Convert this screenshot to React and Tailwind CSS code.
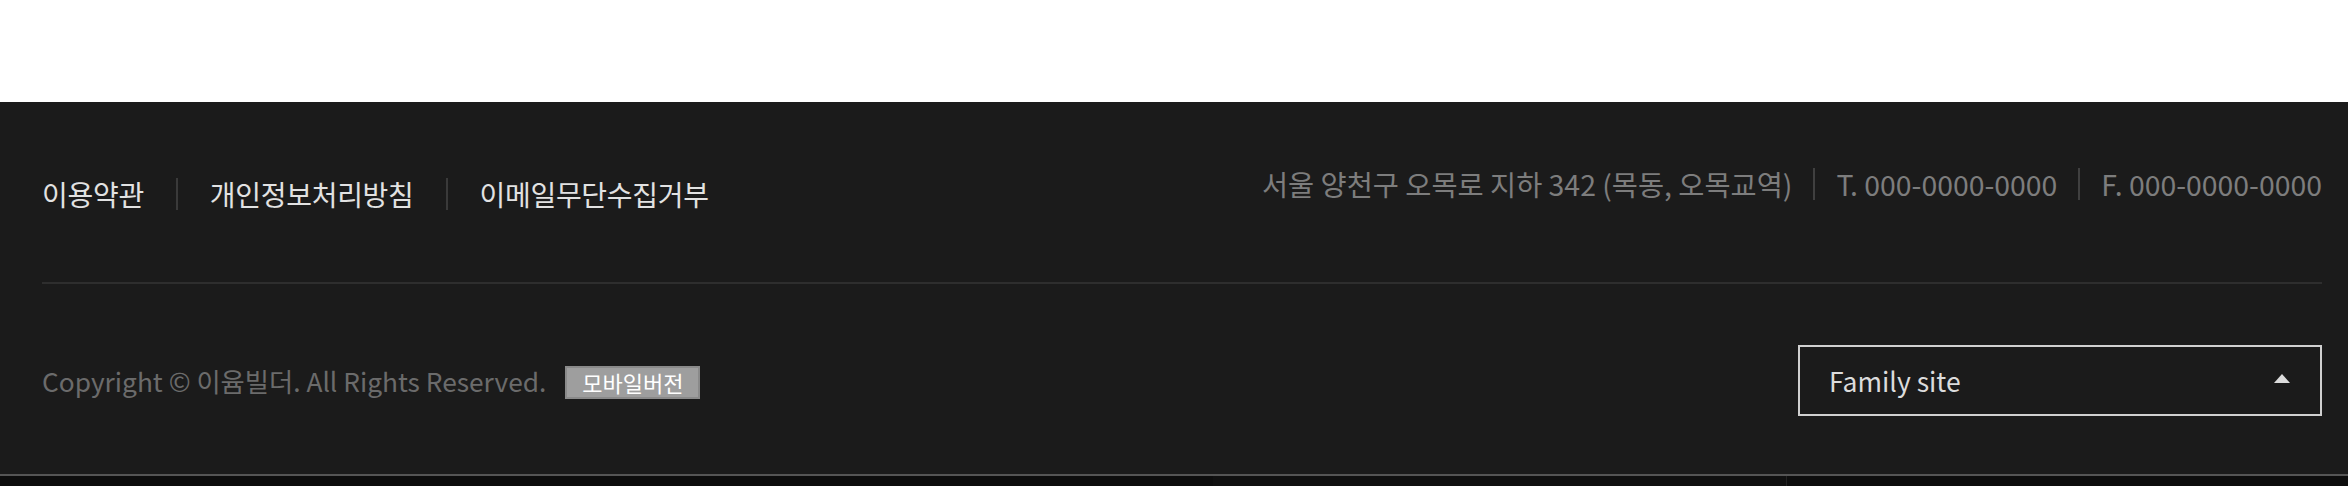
export default function App() {
  const font = { fontFamily: '"Noto Sans CJK KR", "Noto Sans", sans-serif' };
  return (
    <div className="w-[2348px] h-[486px] bg-white flex flex-col" style={font}>
      <div className="h-[102px] bg-white shrink-0" />
      <footer className="bg-[#1b1b1b] h-[372px] shrink-0 pl-[42px] pr-[26px] flex flex-col">
        <div className="flex justify-between items-start pt-[72px] h-[182px] border-b-2 border-[#2e2e2e]">
          <nav className="flex items-center text-[28px] leading-[40px] text-[#e2e2e2] tracking-[-0.3px]">
            <a>이용약관</a>
            <span className="mx-[32px] w-[2px] h-[32px] bg-[#3a3a3a]" />
            <a>개인정보처리방침</a>
            <span className="mx-[32px] w-[2px] h-[32px] bg-[#3a3a3a]" />
            <a>이메일무단수집거부</a>
          </nav>
          <div className="flex items-center text-[28.4px] leading-[40px] text-[#7d7d7d] -mt-[10px]">
            <span>서울 양천구 오목로 지하 342 (목동, 오목교역)</span>
            <span className="mx-[21px] w-[2px] h-[32px] bg-[#404040]" />
            <span>T. 000-0000-0000</span>
            <span className="mx-[21px] w-[2px] h-[32px] bg-[#404040]" />
            <span>F. 000-0000-0000</span>
          </div>
        </div>
        <div className="flex justify-between items-center pt-[61px]">
          <div className="flex items-center">
            <span className="text-[26.3px] text-[#6b6b6b]">Copyright © 이윰빌더. All Rights Reserved.</span>
            <span className="ml-[19px] mt-[4px] w-[135px] h-[33px] bg-[#9e9e9e] border-2 border-[#8a8a8a] text-white text-[22px] leading-[29px] text-center">모바일버전</span>
          </div>
          <div className="w-[524px] h-[71px] border-2 border-[#d0d0d0] flex items-center justify-between pl-[29px] pr-[30px]">
            <span className="text-[26.5px] text-[#dcdcdc]">Family site</span>
            <svg width="16" height="9" viewBox="0 0 16 9" className="-mt-[4px]">
              <polygon points="8,0 16,9 0,9" fill="#dcdcdc" />
            </svg>
          </div>
        </div>
      </footer>
      <div className="h-[2px] bg-[#555555] shrink-0" />
      <div className="flex-1 bg-[#0d0d0d] flex">
        <div className="w-[1213px]" />
        <div className="w-[574px] bg-[#101010] border-r border-[#222]" />
        <div className="flex-1" />
      </div>
    </div>
  );
}
